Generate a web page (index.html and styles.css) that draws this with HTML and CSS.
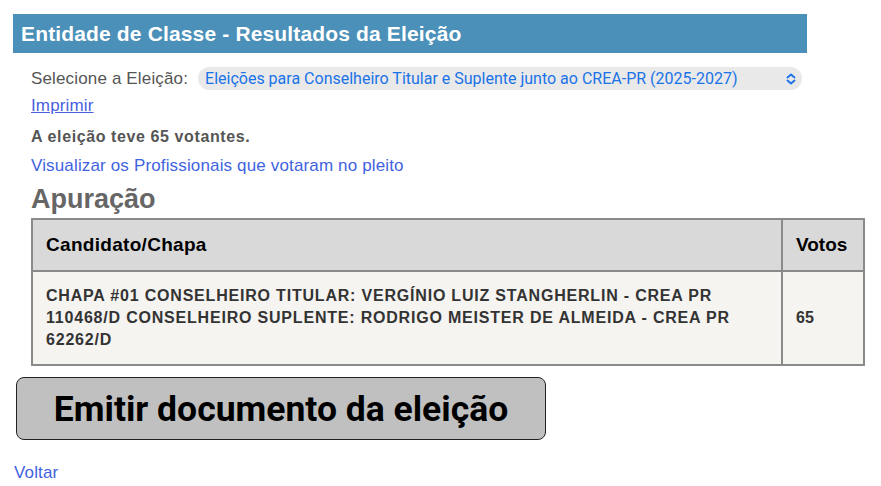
FILE: index.html
```html
<!DOCTYPE html>
<html lang="pt-BR">
<head>
  <meta charset="UTF-8">
  <title>Entidade de Classe - Resultados da Eleição</title>
  <link rel="stylesheet" href="styles.css">
</head>
<body>

  <div class="titulo">Entidade de Classe - Resultados da Eleição</div>

  <div class="conteudo">
    <div class="linha-eleicao">
      <label for="eleicao">Selecione a Eleição:</label>
      <div class="select-wrap">
        <select id="eleicao">
          <option>Eleições para Conselheiro Titular e Suplente junto ao CREA-PR (2025-2027)</option>
        </select>
        <svg class="chevron" width="10" height="12" viewBox="0 0 10 12">
          <path d="M1.5 4.5 L5 1.5 L8.5 4.5 M1.5 7.5 L5 10.5 L8.5 7.5" fill="none" stroke="#1a73e8" stroke-width="1.9" stroke-linecap="round" stroke-linejoin="round"/>
        </svg>
      </div>
    </div>

    <a href="#" class="imprimir">Imprimir</a>

    <p class="votantes">A eleição teve 65 votantes.</p>

    <a href="#" class="visualizar">Visualizar os Profissionais que votaram no pleito</a>

    <h2>Apuração</h2>

    <table class="apuracao">
      <thead>
        <tr>
          <th>Candidato/Chapa</th>
          <th class="col-votos">Votos</th>
        </tr>
      </thead>
      <tbody>
        <tr>
          <td>CHAPA #01 CONSELHEIRO TITULAR: VERGÍNIO LUIZ STANGHERLIN - CREA PR 110468/D CONSELHEIRO SUPLENTE: RODRIGO MEISTER DE ALMEIDA - CREA PR 62262/D</td>
          <td class="col-votos">65</td>
        </tr>
      </tbody>
    </table>
  </div>

  <button class="emitir">Emitir documento da eleição</button>

  <a href="#" class="voltar">Voltar</a>

</body>
</html>
```

FILE: styles.css
```css
body {
  margin: 0;
  padding: 14px 0 0 13px;
  background: #ffffff;
  font-family: "Liberation Sans", Arial, sans-serif;
  color: #555555;
}

.titulo {
  width: 794px;
  height: 39px;
  box-sizing: border-box;
  padding: 8px 0 0 8px;
  background: #4a90b9;
  color: #ffffff;
  font-size: 21px;
  font-weight: bold;
  letter-spacing: 0.15px;
}

.conteudo {
  padding-left: 18px;
}

.linha-eleicao {
  display: flex;
  align-items: center;
  margin-top: 14px;
  font-size: 17px;
  letter-spacing: 0.15px;
}

.linha-eleicao label {
  margin-right: 10px;
}

.select-wrap {
  position: relative;
  width: 604px;
}

.select-wrap select {
  appearance: none;
  -webkit-appearance: none;
  width: 100%;
  height: 23px;
  border: none;
  border-radius: 12px;
  background: #e9e9e9;
  color: #1a73e8;
  font-family: Roboto, "Noto Sans", sans-serif;
  font-size: 16px;
  letter-spacing: 0;
  padding: 0 0 0 7px;
}

.chevron {
  position: absolute;
  right: 6px;
  top: 6px;
}

.imprimir {
  display: inline-block;
  margin-top: 6px;
  color: #4a5fe0;
  font-size: 17px;
  letter-spacing: 0.15px;
}

.votantes {
  margin: 12px 0 0;
  font-size: 16px;
  font-weight: bold;
  letter-spacing: 0.6px;
}

.visualizar {
  display: inline-block;
  margin-top: 10px;
  color: #3f63e0;
  font-size: 17px;
  letter-spacing: 0.15px;
  text-decoration: none;
}

h2 {
  margin: 8px 0 3px;
  font-size: 27px;
  color: #666666;
}

.apuracao {
  width: 834px;
  border-collapse: collapse;
  border: 2px solid #8a8a8a;
}

.apuracao th,
.apuracao td {
  border: 2px solid #8a8a8a;
  text-align: left;
}

.apuracao th {
  height: 50px;
  padding: 0 13px;
  background: #d9d9d9;
  color: #000000;
  font-size: 19px;
  letter-spacing: 0.3px;
}

.apuracao td {
  height: 92px;
  padding: 0 13px;
  background: #f5f4f1;
  color: #333333;
  font-size: 16px;
  font-weight: bold;
  line-height: 22px;
  letter-spacing: 0.8px;
}

.apuracao .col-votos {
  width: 54px;
  letter-spacing: 0;
}

.emitir {
  display: block;
  margin: 11px 0 0 3px;
  width: 530px;
  height: 63px;
  border: 1px solid #222222;
  border-radius: 8px;
  background: #c0c0c0;
  color: #000000;
  font-family: Roboto, "Liberation Sans", sans-serif;
  font-size: 35.5px;
  font-weight: bold;
}

.voltar {
  display: inline-block;
  margin: 23px 0 0 1px;
  color: #3f63e0;
  font-size: 17px;
  letter-spacing: 0.15px;
  text-decoration: none;
}
```
